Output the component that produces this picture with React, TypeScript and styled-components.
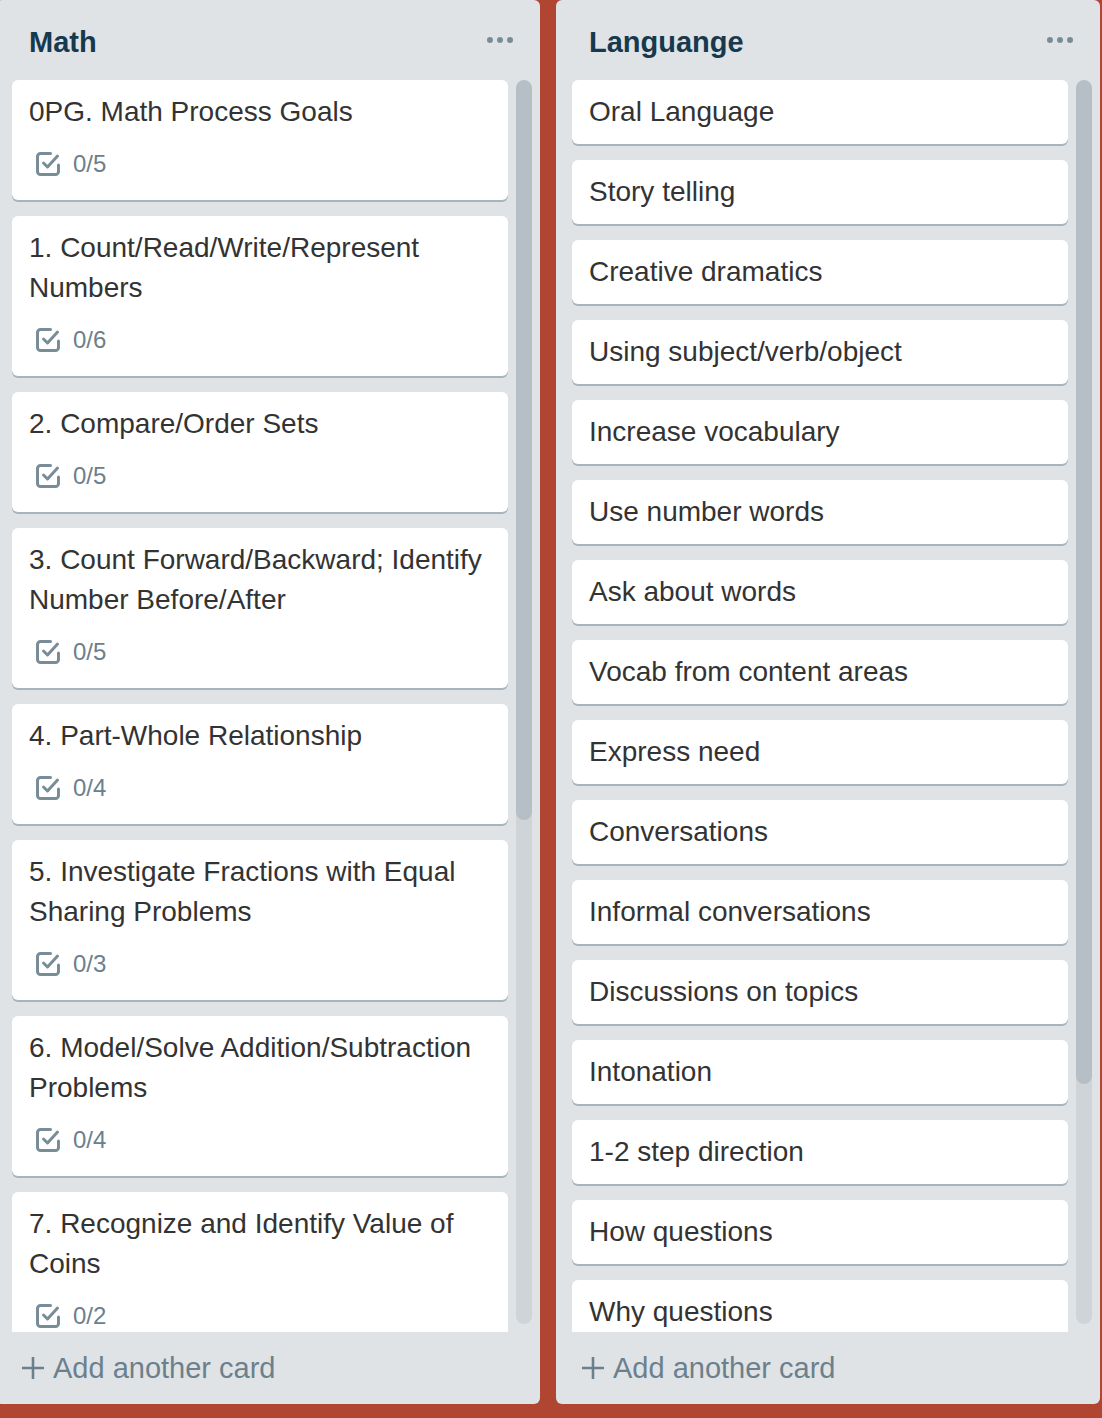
import React from 'react';
import styled, { createGlobalStyle } from 'styled-components';

const GlobalStyle = createGlobalStyle`
  html, body {
    margin: 0;
    padding: 0;
    background: #b04632;
  }
  body {
    font-family: 'Liberation Sans', Arial, sans-serif;
    -webkit-font-smoothing: antialiased;
  }
`;

const Board = styled.div`
  display: flex;
  align-items: flex-start;
  gap: 16px;
  height: 1418px;
  overflow: hidden;
  background: #b04632;
`;

const List = styled.section<{ $offset?: number }>`
  flex: none;
  width: 544px;
  height: 1404px;
  margin-left: ${(p) => p.$offset ?? 0}px;
  background: #dfe3e6;
  border-radius: 6px;
  display: flex;
  flex-direction: column;
`;

const Header = styled.header`
  height: 80px;
  box-sizing: border-box;
  padding: 4px 27px 0 33px;
  display: flex;
  align-items: center;
  justify-content: space-between;
`;

const Title = styled.h2`
  margin: 0;
  font-size: 29px;
  line-height: 40px;
  font-weight: 700;
  color: #17394d;
`;

const Dots = styled.div`
  display: flex;
  gap: 4px;
  margin-top: -4px;

  span {
    width: 6px;
    height: 6px;
    border-radius: 50%;
    background: #798d99;
  }
`;

const Body = styled.div`
  height: 1252px;
  display: flex;
  gap: 8px;
  padding: 0 8px 0 16px;
`;

const Cards = styled.div`
  flex: 1;
  overflow: hidden;
  display: flex;
  flex-direction: column;
  gap: 16px;
`;

const Track = styled.div`
  flex: none;
  width: 16px;
  height: 1244px;
  border-radius: 8px;
  background: #cfd4d8;
  overflow: hidden;
`;

const Thumb = styled.div`
  width: 100%;
  border-radius: 8px;
  background: #b6bfc6;
`;

const Card = styled.article`
  flex: none;
  background: #fff;
  border-radius: 6px;
  box-shadow: 0 2px 0 rgba(9, 45, 66, 0.25);
  padding: 12px 16px 12px 17px;
`;

const CardTitle = styled.div`
  font-size: 28px;
  line-height: 40px;
  color: #333;
`;

const Badges = styled.div`
  display: flex;
  align-items: center;
  gap: 13px;
  height: 40px;
  margin: 12px 0 4px 7px;
  font-size: 24px;
  color: #6b808c;
`;

const Footer = styled.button`
  flex: 1;
  display: flex;
  align-items: center;
  gap: 9px;
  border: none;
  background: none;
  padding: 0 0 0 26px;
  font-family: inherit;
  font-size: 29px;
  color: #6b808c;
  cursor: pointer;
`;

const CheckIcon = () => (
  <svg width="24" height="24" viewBox="0 0 24 24" fill="none" stroke="#798d99" strokeWidth="3" strokeLinecap="round" strokeLinejoin="round">
    <path d="M22.5 13v6.5a3 3 0 0 1-3 3h-15a3 3 0 0 1-3-3v-15a3 3 0 0 1 3-3h10" />
    <path d="M7.5 11l4 4 10-11" />
  </svg>
);

const PlusIcon = () => (
  <svg width="22" height="22" viewBox="0 0 22 22" stroke="#6b808c" strokeWidth="2.6">
    <path d="M11 0v22M0 11h22" />
  </svg>
);

interface CardData {
  title: string;
  checklist?: string;
}

interface ListData {
  name: string;
  thumb: number;
  offset?: number;
  cards: CardData[];
}

const lists: ListData[] = [
  {
    name: 'Math',
    thumb: 740,
    offset: -4,
    cards: [
      { title: '0PG. Math Process Goals', checklist: '0/5' },
      { title: '1. Count/Read/Write/Represent Numbers', checklist: '0/6' },
      { title: '2. Compare/Order Sets', checklist: '0/5' },
      { title: '3. Count Forward/Backward; Identify Number Before/After', checklist: '0/5' },
      { title: '4. Part-Whole Relationship', checklist: '0/4' },
      { title: '5. Investigate Fractions with Equal Sharing Problems', checklist: '0/3' },
      { title: '6. Model/Solve Addition/Subtraction Problems', checklist: '0/4' },
      { title: '7. Recognize and Identify Value of Coins', checklist: '0/2' },
    ],
  },
  {
    name: 'Languange',
    thumb: 1004,
    cards: [
      'Oral Language',
      'Story telling',
      'Creative dramatics',
      'Using subject/verb/object',
      'Increase vocabulary',
      'Use number words',
      'Ask about words',
      'Vocab from content areas',
      'Express need',
      'Conversations',
      'Informal conversations',
      'Discussions on topics',
      'Intonation',
      '1-2 step direction',
      'How questions',
      'Why questions',
    ].map((title) => ({ title })),
  },
];

const App = () => (
  <>
    <GlobalStyle />
    <Board>
      {lists.map((list) => (
        <List key={list.name} $offset={list.offset}>
          <Header>
            <Title>{list.name}</Title>
            <Dots>
              <span />
              <span />
              <span />
            </Dots>
          </Header>
          <Body>
            <Cards>
              {list.cards.map((card) => (
                <Card key={card.title}>
                  <CardTitle>{card.title}</CardTitle>
                  {card.checklist && (
                    <Badges>
                      <CheckIcon />
                      {card.checklist}
                    </Badges>
                  )}
                </Card>
              ))}
            </Cards>
            <Track>
              <Thumb style={{ height: list.thumb }} />
            </Track>
          </Body>
          <Footer>
            <PlusIcon />
            Add another card
          </Footer>
        </List>
      ))}
    </Board>
  </>
);

export default App;
